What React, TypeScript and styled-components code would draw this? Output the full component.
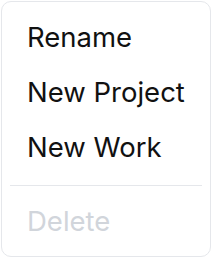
import React from "react";
import styled, { createGlobalStyle } from "styled-components";

const Global = createGlobalStyle`
  html, body { margin: 0; padding: 0; background: #ffffff; }
  body { font-family: Inter, "Noto Sans", sans-serif; }
`;

const Wrap = styled.div`
  padding: 1px;
  width: 210px;
`;

const Menu = styled.div`
  box-sizing: border-box;
  width: 210px;
  border: 1px solid #e5e7eb;
  border-radius: 10px;
  background: #ffffff;
  padding: 8px 8px 7px;
  display: flex;
  flex-direction: column;
`;

const Item = styled.div<{ $disabled?: boolean }>`
  font-size: 27.5px;
  line-height: 31px;
  padding: 12px 17px;
  color: ${(p) => (p.$disabled ? "#d1d5db" : "#111111")};
  white-space: nowrap;
`;

const Separator = styled.div`
  height: 1px;
  background: #e5e7eb;
  margin: 10px 0 8px;
`;

export default function App() {
  return (
    <Wrap>
      <Global />
      <Menu>
        <Item>Rename</Item>
        <Item>New Project</Item>
        <Item>New Work</Item>
        <Separator />
        <Item $disabled>Delete</Item>
      </Menu>
    </Wrap>
  );
}
